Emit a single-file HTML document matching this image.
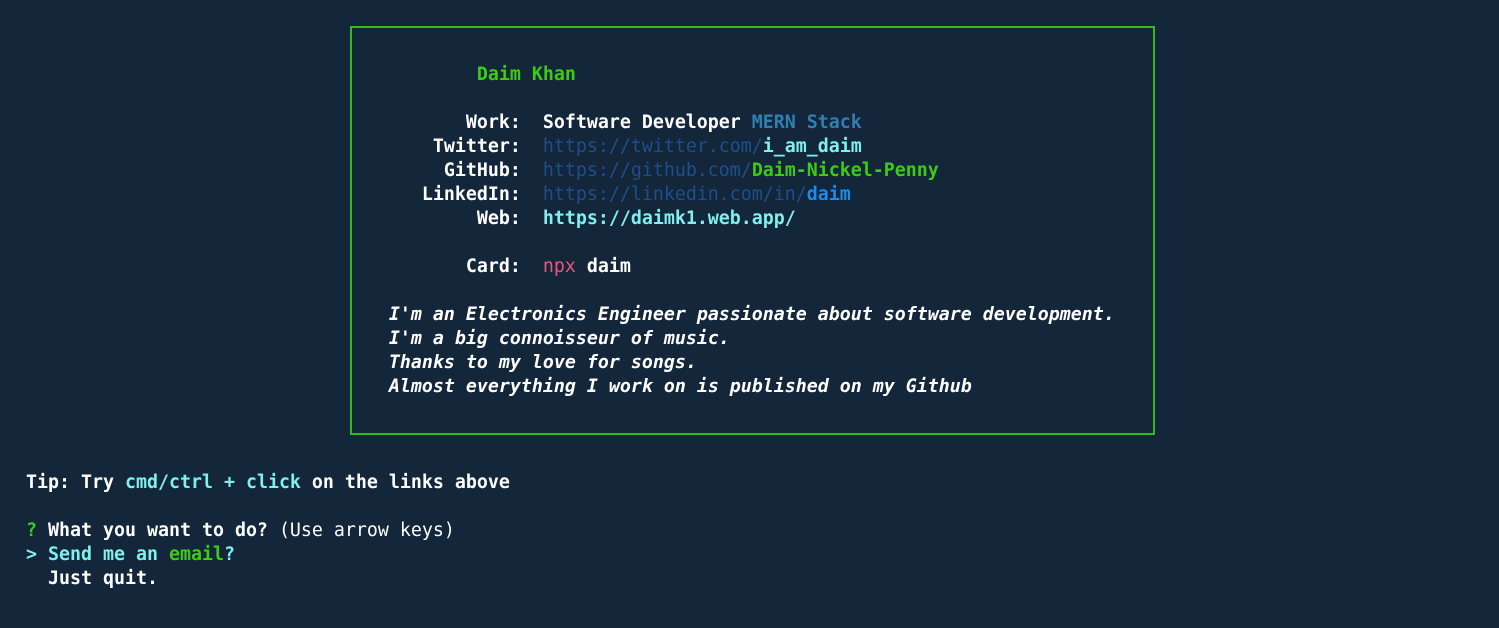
<!DOCTYPE html>
<html><head><meta charset="utf-8"><style>
html,body{margin:0;padding:0;background:#13263a;width:1499px;height:628px;overflow:hidden}
.box{position:absolute;left:350px;top:26px;width:801px;height:405px;border:2px solid #37b81f}
pre{position:absolute;left:26px;top:-9px;margin:0;font-family:"DejaVu Sans Mono","Liberation Mono",monospace;font-size:18.27px;line-height:24px;color:#fff;font-weight:bold}
.g{color:#3ccc16}
.m{color:#2f7fb3}.l{color:#1d4f8f;font-weight:normal}.c{color:#7ef0ef}.bl{color:#1a8cf0}.p{color:#e8577a;font-weight:normal}
i{font-style:italic}
</style></head><body>
<div class="box"></div>
<pre>



                                         <span class="g">Daim Khan</span>

                                        Work:  Software Developer <span class="m">MERN Stack</span>
                                     Twitter:  <span class="l">https://twitter.com/</span><span class="c">i_am_daim</span>
                                      GitHub:  <span class="l">https://github.com/</span><span class="g">Daim-Nickel-Penny</span>
                                    LinkedIn:  <span class="l">https://linkedin.com/in/</span><span class="bl">daim</span>
                                         Web:  <span class="c">https://daimk1.web.app/</span>

                                        Card:  <span class="p">npx</span> daim

                                 <i>I'm an Electronics Engineer passionate about software development.</i>
                                 <i>I'm a big connoisseur of music.</i>
                                 <i>Thanks to my love for songs.</i>
                                 <i>Almost everything I work on is published on my Github</i>



Tip: Try <span class="c">cmd/ctrl + click</span> on the links above

<span class="g">?</span> What you want to do? <span style="font-weight:normal">(Use arrow keys)</span>
<span class="c">&gt; Send me an <span class="g">email</span>?</span>
  Just quit.
</pre>
</body></html>
